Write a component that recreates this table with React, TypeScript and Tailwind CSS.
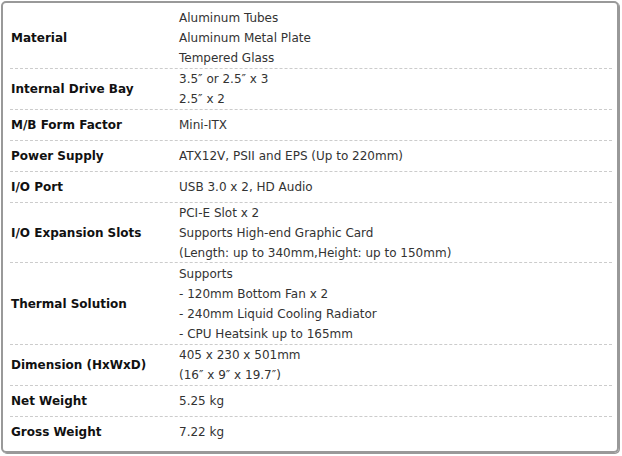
const rows: { label: string; lines: string[]; h: string }[] = [
  { label: 'Material', lines: ['Aluminum Tubes', 'Aluminum Metal Plate', 'Tempered Glass'], h: 'h-[66px] pt-[4px]' },
  { label: 'Internal Drive Bay', lines: ['3.5″ or 2.5″ x 3', '2.5″ x 2'], h: 'h-[41px]' },
  { label: 'M/B Form Factor', lines: ['Mini-ITX'], h: 'h-[31px]' },
  { label: 'Power Supply', lines: ['ATX12V, PSII and EPS (Up to 220mm)'], h: 'h-[31px]' },
  { label: 'I/O Port', lines: ['USB 3.0 x 2, HD Audio'], h: 'h-[31px]' },
  {
    label: 'I/O Expansion Slots',
    lines: ['PCI-E Slot x 2', 'Supports High-end Graphic Card', '(Length: up to 340mm,Height: up to 150mm)'],
    h: 'h-[60px]',
  },
  {
    label: 'Thermal Solution',
    lines: ['Supports', '- 120mm Bottom Fan x 2', '- 240mm Liquid Cooling Radiator', '- CPU Heatsink up to 165mm'],
    h: 'h-[82px]',
  },
  { label: 'Dimension (HxWxD)', lines: ['405 x 230 x 501mm', '(16″ x 9″ x 19.7″)'], h: 'h-[41px]' },
  { label: 'Net Weight', lines: ['5.25 kg'], h: 'h-[31px]' },
  { label: 'Gross Weight', lines: ['7.22 kg'], h: 'h-[29px]' },
];

export default function App() {
  return (
    <div className="w-[622px] h-[456px] bg-white pt-px pl-px font-['DejaVu_Sans',Verdana,sans-serif] text-[12px] leading-[20px]">
      <div className="w-[618px] h-[452px] border-2 border-[#999] rounded-[5px] shadow-[1px_1px_0_#999] pl-[7px] pr-[5px]">
        {rows.map((r, i) => (
          <div
            key={r.label}
            className={`flex items-center ${r.h} ${i < rows.length - 1 ? 'border-b border-dashed border-[#ccc]' : ''}`}
          >
            <div className="w-[168px] pl-px font-bold text-[#111]">{r.label}</div>
            <div className="pl-px text-[#333]">
              {r.lines.map((l) => (
                <div key={l}>{l}</div>
              ))}
            </div>
          </div>
        ))}
      </div>
    </div>
  );
}
